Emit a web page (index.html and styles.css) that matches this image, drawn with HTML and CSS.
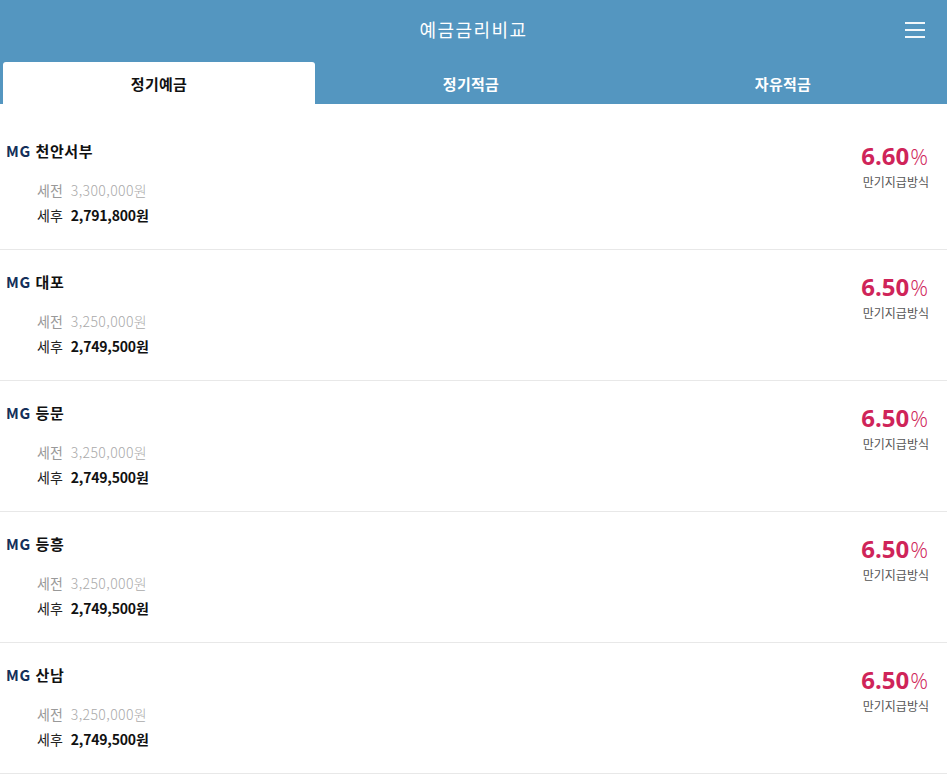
FILE: index.html
```html
<!DOCTYPE html>
<html lang="ko">
<head>
<meta charset="utf-8">
<title>예금금리비교</title>
<link rel="stylesheet" href="styles.css">
</head>
<body>
<header class="top">
  <div class="titlebar">
    <h1 class="title">예금금리비교</h1>
    <button class="menu" aria-label="메뉴">
      <span></span><span></span><span></span>
    </button>
  </div>
  <nav class="tabs">
    <a class="tab active">정기예금</a>
    <a class="tab">정기적금</a>
    <a class="tab">자유적금</a>
  </nav>
</header>
<ul class="list">
  <li class="item">
    <div class="info">
      <div class="name"><span class="mg">MG</span> 천안서부</div>
      <div class="amt pre"><span class="lbl">세전</span><span class="val">3,300,000원</span></div>
      <div class="amt post"><span class="lbl">세후</span><span class="val">2,791,800원</span></div>
    </div>
    <div class="rate">
      <div class="pct">6.60<span class="sign">%</span></div>
      <div class="type">만기지급방식</div>
    </div>
  </li>
  <li class="item">
    <div class="info">
      <div class="name"><span class="mg">MG</span> 대포</div>
      <div class="amt pre"><span class="lbl">세전</span><span class="val">3,250,000원</span></div>
      <div class="amt post"><span class="lbl">세후</span><span class="val">2,749,500원</span></div>
    </div>
    <div class="rate">
      <div class="pct">6.50<span class="sign">%</span></div>
      <div class="type">만기지급방식</div>
    </div>
  </li>
  <li class="item">
    <div class="info">
      <div class="name"><span class="mg">MG</span> 등문</div>
      <div class="amt pre"><span class="lbl">세전</span><span class="val">3,250,000원</span></div>
      <div class="amt post"><span class="lbl">세후</span><span class="val">2,749,500원</span></div>
    </div>
    <div class="rate">
      <div class="pct">6.50<span class="sign">%</span></div>
      <div class="type">만기지급방식</div>
    </div>
  </li>
  <li class="item">
    <div class="info">
      <div class="name"><span class="mg">MG</span> 등흥</div>
      <div class="amt pre"><span class="lbl">세전</span><span class="val">3,250,000원</span></div>
      <div class="amt post"><span class="lbl">세후</span><span class="val">2,749,500원</span></div>
    </div>
    <div class="rate">
      <div class="pct">6.50<span class="sign">%</span></div>
      <div class="type">만기지급방식</div>
    </div>
  </li>
  <li class="item">
    <div class="info">
      <div class="name"><span class="mg">MG</span> 산남</div>
      <div class="amt pre"><span class="lbl">세전</span><span class="val">3,250,000원</span></div>
      <div class="amt post"><span class="lbl">세후</span><span class="val">2,749,500원</span></div>
    </div>
    <div class="rate">
      <div class="pct">6.50<span class="sign">%</span></div>
      <div class="type">만기지급방식</div>
    </div>
  </li>
</ul>
</body>
</html>
```
FILE: styles.css
```css
* { box-sizing: border-box; }
html, body { margin: 0; padding: 0; background: #fff; }
body {
  font-family: "Noto Sans CJK KR", "Noto Sans", sans-serif;
  color: #222;
  overflow: hidden;
}
.top { background: #5496c0; }
.titlebar {
  height: 62px;
  display: flex;
  align-items: center;
  justify-content: center;
  position: relative;
}
.title {
  margin: 0 0 4px 0;
  font-size: 18px;
  font-weight: 400;
  color: #fff;
  letter-spacing: 1.4px;
}
.menu {
  position: absolute;
  right: 22px;
  top: 22px;
  width: 20px;
  height: 16px;
  padding: 0;
  border: 0;
  background: transparent;
  display: flex;
  flex-direction: column;
  justify-content: space-between;
}
.menu span { display: block; height: 2px; background: #f2f7fb; }
.tabs {
  display: flex;
  height: 42px;
  padding: 0 8px 0 3px;
}
.tab {
  flex: 1;
  display: flex;
  align-items: center;
  justify-content: center;
  font-size: 15px;
  font-weight: 700;
  color: #fff;
  letter-spacing: 0.3px;
  border-radius: 3px 3px 0 0;
}
.tab.active { background: #fff; color: #111; }
.list { list-style: none; margin: 0; padding: 15px 0 0 0; }
.item {
  height: 131px;
  border-bottom: 1px solid #e8e8e8;
  display: flex;
  justify-content: space-between;
  padding: 21px 19px 0 6px;
}
.name { font-size: 15px; font-weight: 700; color: #111; line-height: 22px; letter-spacing: 0.6px; }
.mg { color: #14305a; }
.amt { font-size: 14px; line-height: 24px; padding-left: 31px; }
.pre { margin-top: 16px; color: #999; }
.pre .val { color: #aaa; font-weight: 300; letter-spacing: 0.4px; }
.post { margin-top: 1px; color: #222; }
.post .val { font-weight: 700; color: #111; letter-spacing: -0.2px; }
.lbl { margin-right: 8px; }
.rate { text-align: right; padding-top: 1px; }
.pct {
  font-family: "Open Sans", "Noto Sans", sans-serif;
  font-size: 24px;
  font-weight: 700;
  color: #cf2459;
  line-height: 30px;
}
.sign { font-weight: 300; font-size: 22px; margin-left: 1px; }
.type { font-size: 12px; color: #555; line-height: 18px; margin-top: 2px; margin-right: -1px; }
```
